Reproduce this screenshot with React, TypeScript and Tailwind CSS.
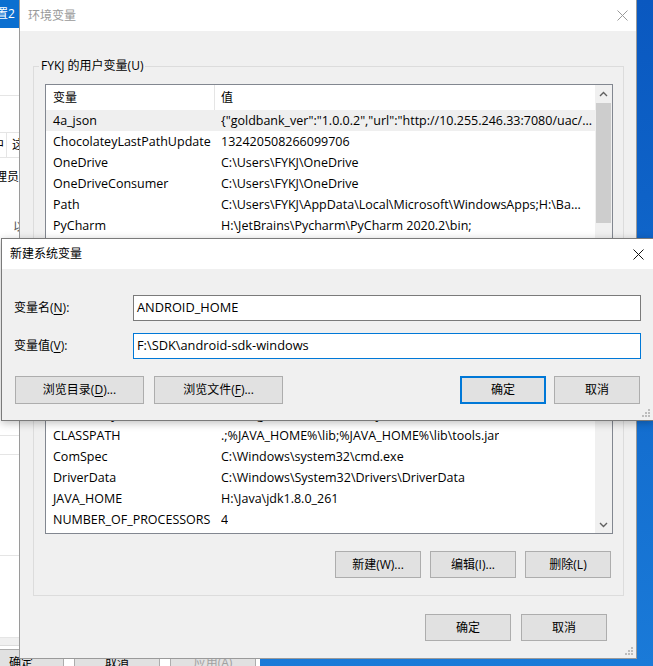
import React from "react";

const rows: [string, string][] = [
  ["4a_json", '{"goldbank_ver":"1.0.0.2","url":"http://10.255.246.33:7080/uac/...'],
  ["ChocolateyLastPathUpdate", "132420508266099706"],
  ["OneDrive", "C:\\Users\\FYKJ\\OneDrive"],
  ["OneDriveConsumer", "C:\\Users\\FYKJ\\OneDrive"],
  ["Path", "C:\\Users\\FYKJ\\AppData\\Local\\Microsoft\\WindowsApps;H:\\Ba..."],
  ["PyCharm", "H:\\JetBrains\\Pycharm\\PyCharm 2020.2\\bin;"],
  ["TEMP", "C:\\Users\\FYKJ\\AppData\\Local\\Temp"],
  ["TMP", "C:\\Users\\FYKJ\\AppData\\Local\\Temp"],
  ["ACSetupSvcPort", "23210"],
  ["ACSvcPort", "17532"],
  ["ANDROID_HOME", "F:\\SDK\\android-sdk-windows"],
  ["ANDROID_SDK_HOME", "F:\\SDK\\avd"],
  ["asl.log", "Destination=file"],
  ["CATALINA_HOME", "H:\\apache-tomcat-9.0.37"],
  ["ChocolateyInstall", "C:\\ProgramData\\chocolatey"],
  ["CLASSPATH", ".;%JAVA_HOME%\\lib;%JAVA_HOME%\\lib\\tools.jar"],
  ["ComSpec", "C:\\Windows\\system32\\cmd.exe"],
  ["DriverData", "C:\\Windows\\System32\\Drivers\\DriverData"],
  ["JAVA_HOME", "H:\\Java\\jdk1.8.0_261"],
  ["NUMBER_OF_PROCESSORS", "4"],
];

function CloseX({ color }: { color: string }) {
  return (
    <svg width="11" height="11" viewBox="0 0 11 11">
      <path d="M0.5 0.5 L10.5 10.5 M10.5 0.5 L0.5 10.5" stroke={color} strokeWidth="1" fill="none" />
    </svg>
  );
}

function Grip() {
  return (
    <svg width="8" height="8" viewBox="0 0 8 8" className="absolute right-[3px] bottom-[3px]">
      <g fill="#bdbdbd">
        <rect x="6" y="0" width="2" height="2" />
        <rect x="3" y="3" width="2" height="2" />
        <rect x="6" y="3" width="2" height="2" />
        <rect x="0" y="6" width="2" height="2" />
        <rect x="3" y="6" width="2" height="2" />
        <rect x="6" y="6" width="2" height="2" />
      </g>
    </svg>
  );
}

function Btn({ children, w, h, primary, muted }: { children: React.ReactNode; w: string; h: string; primary?: boolean; muted?: boolean }) {
  return (
    <div
      className={`flex items-center justify-center bg-[#e1e1e1] ${w} ${h} ${
        primary ? "border-2 border-[#0078d7]" : "border border-[#adadad]"
      } ${muted ? "text-[#a0a0a0] bg-[#cccccc]" : "text-black"}`}
    >
      {children}
    </div>
  );
}

function Chevron({ up }: { up?: boolean }) {
  return (
    <svg width="9" height="6" viewBox="0 0 9 6">
      <path d={up ? "M1 5 L4.5 1.5 L8 5" : "M1 1 L4.5 4.5 L8 1"} stroke="#606060" strokeWidth="1.4" fill="none" />
    </svg>
  );
}

function BackWindow() {
  return (
    <div className="absolute left-0 top-0 w-[260px] h-[700px] bg-white flex flex-col">
      <div className="h-[28px] bg-[#0b6fd0] text-white flex items-center">
        <span className="ml-[-4px]">置2</span>
      </div>
      <div className="h-[68px] border-b border-[#e5e5e5]" />
      <div className="h-[37px] border-b border-[#e5e5e5]" />
      <div className="h-[25px] border-b border-[#e5e5e5] flex items-center">
        <span className="ml-[-8px]">中</span>
        <span className="ml-[2px] h-full border-l border-[#e5e5e5] pl-[5px] flex items-center">这</span>
      </div>
      <div className="h-[28px] flex items-end">
        <span className="ml-[-5px]">理员多</span>
      </div>
      <div className="h-[50px] flex items-end">
        <span className="ml-[13px] text-[#555]">以</span>
      </div>
      <div className="h-[200px] border-b border-[#e5e5e5]" />
      <div className="h-[19px] border-b border-[#e5e5e5]" />
      <div className="h-[101px] border-b border-[#e5e5e5]" />
      <div className="h-[82px] border-b border-[#e5e5e5]" />
      <div className="h-[8px] bg-[#f0f0f0] border-b border-[#dcdcdc]" />
      <div className="flex gap-[10px] ml-[-22px] mt-[3px]">
        <Btn w="w-[86px]" h="h-[27px]">确定</Btn>
        <Btn w="w-[86px]" h="h-[27px]">取消</Btn>
        <Btn w="w-[86px]" h="h-[27px]" muted>应用(A)</Btn>
      </div>
    </div>
  );
}

function MainWindow() {
  return (
    <div className="absolute left-[19px] top-0 w-[618px] h-[659px] bg-[#f0f0f0] border border-t-0 border-[#9a9a9a] flex flex-col">
      <div className="h-[31px] bg-white flex items-center justify-between pl-[8px] pr-[8px]">
        <span className="text-[#999999]">环境变量</span>
        <CloseX color="#9a9a9a" />
      </div>
      <div className="relative mt-[35px] ml-[13px] mr-[12px] border border-[#dcdcdc] pt-[17px] pl-[11px] pr-[10px] pb-[17px] flex flex-col">
        <span className="absolute left-[5px] top-[-10px] px-[2px] bg-[#f0f0f0] leading-[18px]">FYKJ 的用户变量(U)</span>
        <div className="h-[450px] bg-white border border-[#828790] flex">
          <div className="flex-1 flex flex-col overflow-hidden">
            <div className="h-[25px] flex items-stretch shrink-0">
              <div className="w-[168px] pl-[7px] flex items-center">变量</div>
              <div className="w-px bg-[#e5e5e5]" />
              <div className="pl-[6px] flex items-center">值</div>
            </div>
            {rows.map(([k, v], i) => (
              <div key={k} className={`h-[21px] shrink-0 flex items-center pt-[2px] whitespace-nowrap text-[12.5px] ${i === 0 ? "bg-[#efefef]" : ""}`}>
                <div className="w-[175px] pl-[7px] shrink-0 overflow-hidden">{k}</div>
                <div className="overflow-hidden">{v}</div>
              </div>
            ))}
          </div>
          <div className="w-[17px] bg-[#f0f0f0] flex flex-col items-center">
            <div className="h-[17px] flex items-center justify-center">
              <Chevron up />
            </div>
            <div className="w-[15px] h-[120px] bg-[#cdcdcd] mt-[1px]" />
            <div className="flex-1" />
            <div className="h-[17px] flex items-center justify-center">
              <Chevron />
            </div>
          </div>
        </div>
        <div className="mt-[17px] flex justify-end gap-[9px] pr-[2px]">
          <Btn w="w-[86px]" h="h-[27px]">新建(W)...</Btn>
          <Btn w="w-[86px]" h="h-[27px]">编辑(I)...</Btn>
          <Btn w="w-[86px]" h="h-[27px]">删除(L)</Btn>
        </div>
      </div>
      <div className="mt-[18px] flex justify-end gap-[10px] pr-[29px]">
        <Btn w="w-[86px]" h="h-[27px]">确定</Btn>
        <Btn w="w-[86px]" h="h-[27px]">取消</Btn>
      </div>
      <Grip />
    </div>
  );
}

function NewVarDialog() {
  return (
    <div className="absolute left-[1px] top-[238px] w-[653px] h-[183px] bg-[#f0f0f0] border border-[#7a7a7a] shadow-[0_2px_8px_rgba(0,0,0,0.25)] flex flex-col">
      <div className="h-[30px] bg-white flex items-center justify-between pl-[8px] pr-[9px]">
        <span className="text-black">新建系统变量</span>
        <CloseX color="#111111" />
      </div>
      <div className="mt-[26px] flex items-center pl-[12px] pr-[12px]">
        <div className="w-[119px]">
          变量名(<span className="underline underline-offset-2">N</span>):
        </div>
        <div className="w-[508px] h-[26px] bg-white border border-[#7a7a7a] flex items-center pl-[3px] text-[12.8px]">ANDROID_HOME</div>
      </div>
      <div className="mt-[12px] flex items-center pl-[12px] pr-[12px]">
        <div className="w-[119px]">
          变量值(<span className="underline underline-offset-2">V</span>):
        </div>
        <div className="w-[508px] h-[26px] bg-white border border-[#0078d7] flex items-center pl-[3px] text-[12.8px]">F:\SDK\android-sdk-windows</div>
      </div>
      <div className="mt-[17px] flex items-center pl-[13px] pr-[13px]">
        <div className="flex gap-[10px]">
          <Btn w="w-[129px]" h="h-[28px]">
            <span>
              浏览目录(<span className="underline underline-offset-2">D</span>)...
            </span>
          </Btn>
          <Btn w="w-[129px]" h="h-[28px]">
            <span>
              浏览文件(<span className="underline underline-offset-2">F</span>)...
            </span>
          </Btn>
        </div>
        <div className="flex-1" />
        <div className="flex gap-[8px]">
          <Btn w="w-[86px]" h="h-[28px]" primary>确定</Btn>
          <Btn w="w-[86px]" h="h-[28px]">取消</Btn>
        </div>
      </div>
      <Grip />
    </div>
  );
}

export default function App() {
  return (
    <div className="relative w-[653px] h-[666px] overflow-hidden bg-linear-to-b from-[#0a58c0] to-[#1a7ad8] text-[12px] text-black font-['Open_Sans','Noto_Sans_CJK_SC',sans-serif]">
      <BackWindow />
      <MainWindow />
      <NewVarDialog />
    </div>
  );
}
